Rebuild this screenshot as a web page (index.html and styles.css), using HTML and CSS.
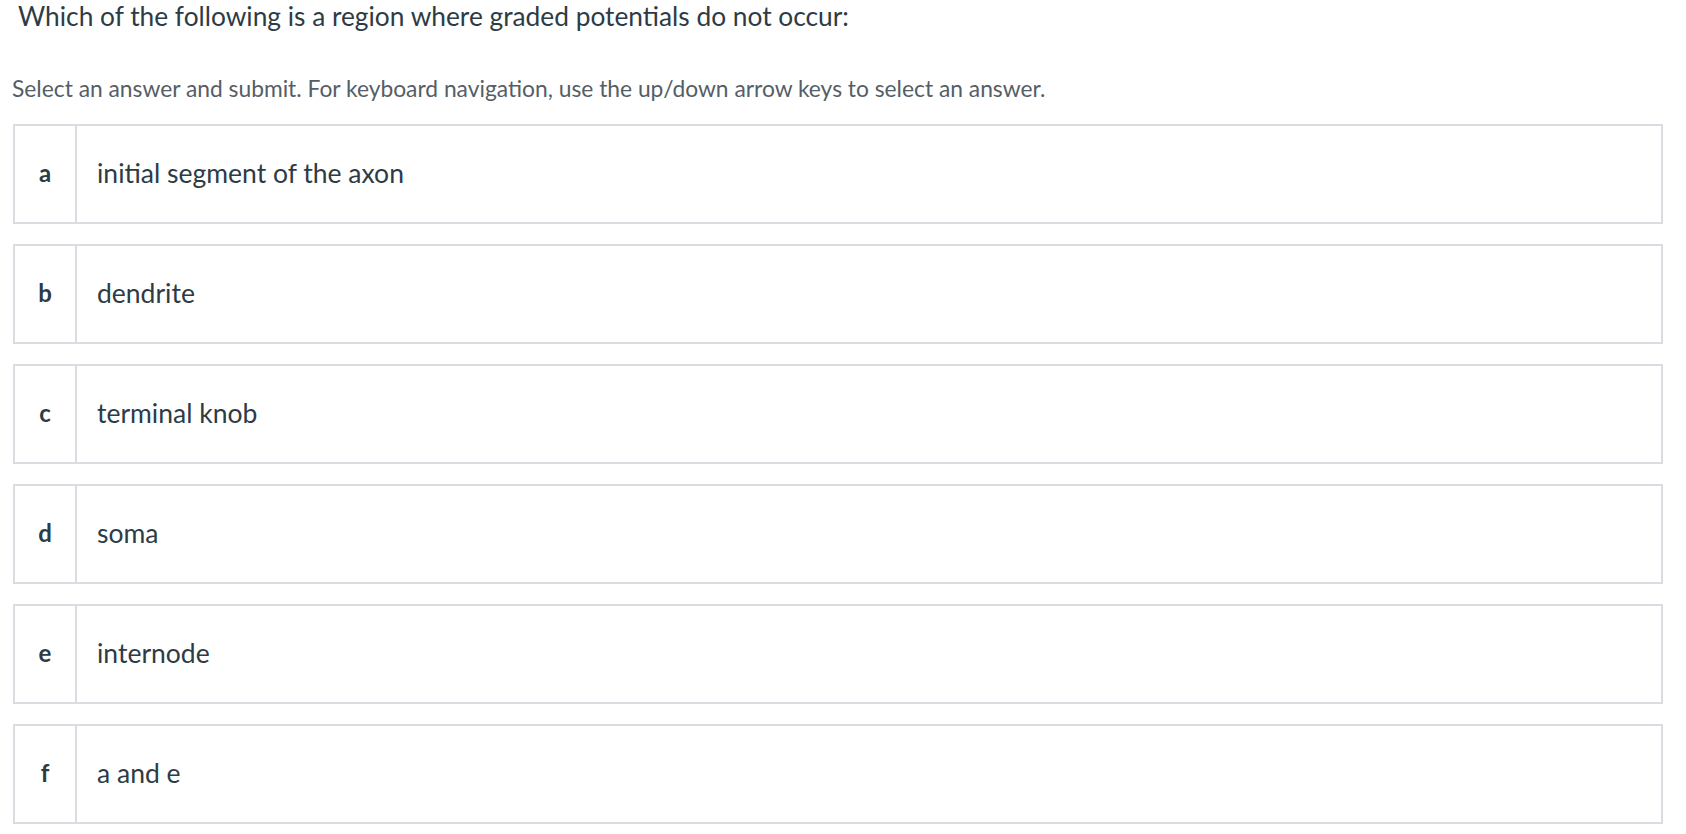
FILE: index.html
```html
<!DOCTYPE html>
<html lang="en">
<head>
    <meta charset="UTF-8">
    <meta name="viewport" content="width=device-width, initial-scale=1.0">
    <title>Question</title>
    <link rel="stylesheet" href="styles.css">
</head>
<body>
    <h1 class="question">Which of the following is a region where graded potentials do not occur:</h1>
    <p class="instructions">Select an answer and submit. For keyboard navigation, use the up/down arrow keys to select an answer.</p>

    <ul class="answers">
        <li class="answer">
            <span class="answer-letter">a</span>
            <span class="answer-text">initial segment of the axon</span>
        </li>
        <li class="answer">
            <span class="answer-letter">b</span>
            <span class="answer-text">dendrite</span>
        </li>
        <li class="answer">
            <span class="answer-letter">c</span>
            <span class="answer-text">terminal knob</span>
        </li>
        <li class="answer">
            <span class="answer-letter">d</span>
            <span class="answer-text">soma</span>
        </li>
        <li class="answer">
            <span class="answer-letter">e</span>
            <span class="answer-text">internode</span>
        </li>
        <li class="answer">
            <span class="answer-letter">f</span>
            <span class="answer-text">a and e</span>
        </li>
    </ul>
</body>
</html>
```

FILE: styles.css
```css
body {
    font-family: Lato, "Open Sans", sans-serif;
    background-color: #fff;
    color: #2d3b45;
    margin: 0;
    padding: 0;
}

.question {
    font-size: 26.3px;
    font-weight: normal;
    line-height: 32px;
    margin: 0;
    padding-left: 18px;
}

.instructions {
    font-size: 22.8px;
    line-height: 28px;
    color: #555e66;
    margin: 42px 0 0 0;
    padding-left: 12px;
}

.answers {
    list-style: none;
    margin: 22px 0 0 13px;
    padding: 0;
    width: 1650px;
    display: flex;
    flex-direction: column;
    gap: 20px;
}

.answer {
    display: flex;
    align-items: stretch;
    height: 100px;
    box-sizing: border-box;
    border: 2px solid #d9dde2;
    font-size: 26.5px;
    line-height: 28px;
}

.answer-letter {
    width: 60px;
    border-right: 2px solid #d9dde2;
    display: flex;
    align-items: center;
    justify-content: center;
    font-weight: bold;
    font-size: 24px;
    padding-bottom: 2px;
}

.answer-text {
    display: flex;
    align-items: center;
    padding-left: 20px;
    padding-bottom: 2px;
}
```
